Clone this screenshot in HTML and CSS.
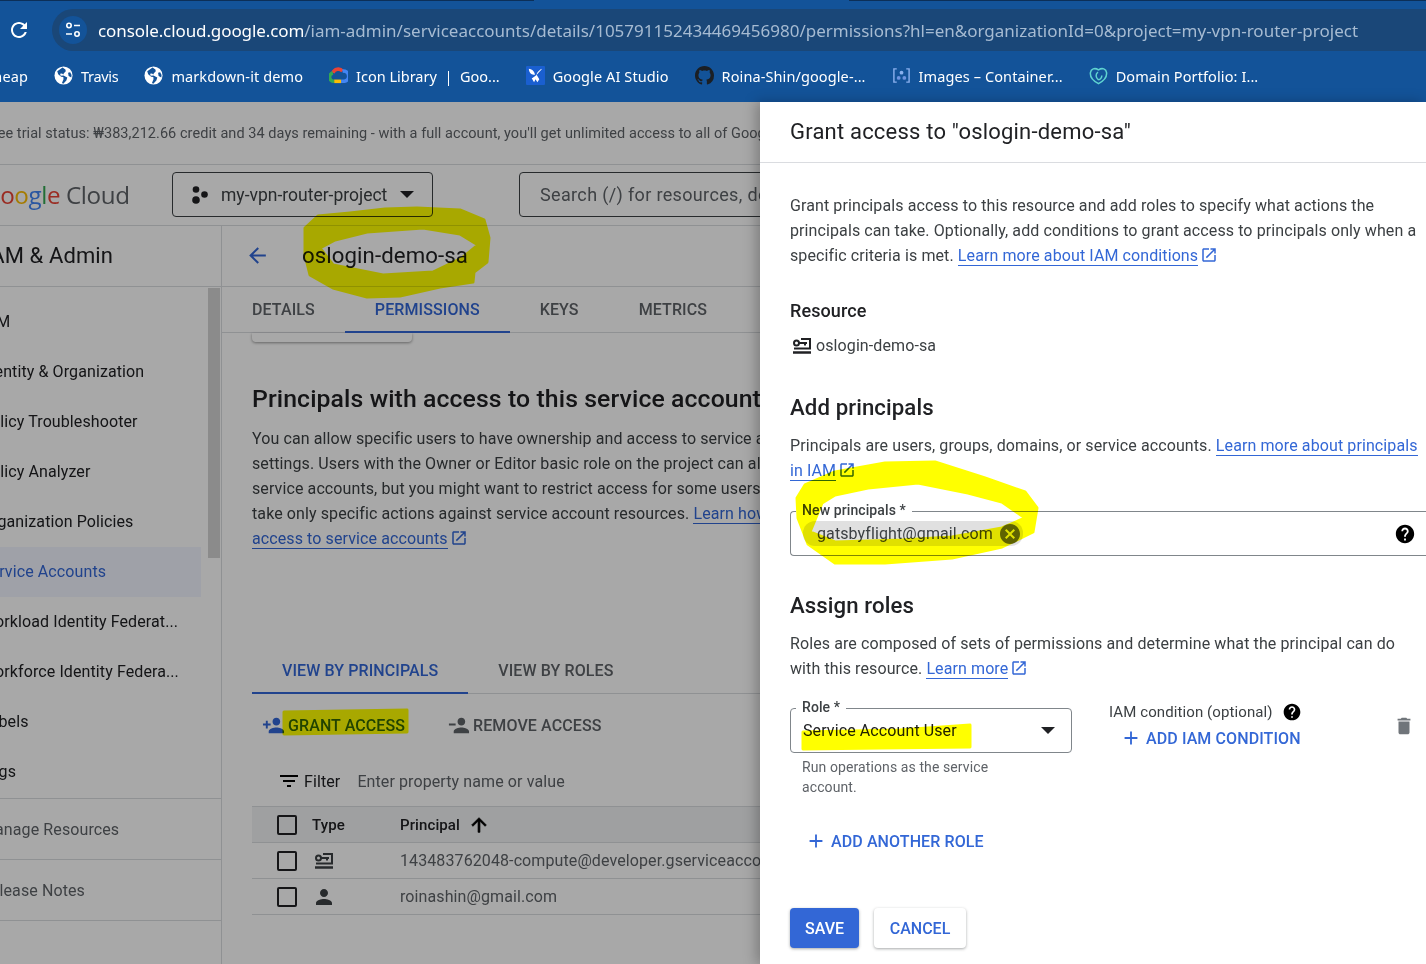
FILE: index.html
```html
<!DOCTYPE html>
<html lang="en">

<head>
    <meta charset="UTF-8">
    <meta name="viewport" content="width=device-width, initial-scale=1.0">
    <title>Grant access to oslogin-demo-sa</title>
    <link rel="stylesheet" href="styles.css">
</head>

<body>
    <svg class="defs" width="0" height="0">
        <symbol id="i-add" viewBox="0 0 24 24"><path d="M19 13h-6v6h-2v-6H5v-2h6V5h2v6h6v2z"/></symbol>
        <symbol id="i-help" viewBox="0 0 24 24"><path d="M12 2C6.48 2 2 6.48 2 12s4.48 10 10 10 10-4.48 10-10S17.52 2 12 2zm1 17h-2v-2h2v2zm2.07-7.75l-.9.92C13.45 12.9 13 13.5 13 15h-2v-.5c0-1.1.45-2.1 1.17-2.83l1.24-1.26c.37-.36.59-.86.59-1.41 0-1.1-.9-2-2-2s-2 .9-2 2H8c0-2.21 1.79-4 4-4s4 1.79 4 4c0 .88-.36 1.68-.93 2.25z"/></symbol>
        <symbol id="i-open" viewBox="0 0 24 24"><path d="M19 19H5V5h7V3H5c-1.11 0-2 .9-2 2v14c0 1.1.89 2 2 2h14c1.1 0 2-.9 2-2v-7h-2v7zM14 3v2h3.59l-9.83 9.83 1.41 1.41L19 6.41V10h2V3h-7z"/></symbol>
        <symbol id="i-person" viewBox="0 0 24 24"><path d="M12 12c2.21 0 4-1.79 4-4s-1.79-4-4-4-4 1.79-4 4 1.79 4 4 4zm0 2c-2.67 0-8 1.34-8 4v2h16v-2c0-2.66-5.33-4-8-4z"/></symbol>
        <symbol id="i-sa" viewBox="0 0 24 24"><g fill="none" stroke-width="2"><circle cx="6.500" cy="9" r="2.500"/><path d="M9 9h8M15 9v2.500M11 5h9v9.500H4"/><path d="M3 18.500h18" stroke-width="2.500"/></g></symbol>
        <symbol id="i-globe" viewBox="0 0 20 20"><circle cx="10" cy="10" r="9.500" fill="#fff"/><path fill="#135399" d="M9 1.600L6.800 3.200 3.400 5.400l1 3.400 3.200 2.600 2.200.2.2 2.400L8.400 18l1.400.6 3.200-3.400 1-3-4-2.200-3 .2-.6-2 2-.2 1.400 1 .6-1.400 2-2-.4-2zM17 6.600l-2.200.6.6 3.200 2.800 1.600.3-2.400z"/></symbol>
    </svg>

    <div class="chrome">
        <div class="strip"><span class="strip-a"></span><span class="strip-b"></span></div>
        <div class="toolbar">
            <svg class="reload" viewBox="0 0 24 24"><path d="M17.65 6.35C16.2 4.9 14.21 4 12 4c-4.42 0-7.99 3.58-7.99 8s3.57 8 7.99 8c3.73 0 6.84-2.55 7.73-6h-2.08c-.82 2.33-3.04 4-5.65 4-3.31 0-6-2.69-6-6s2.69-6 6-6c1.66 0 3.14.69 4.22 1.78L13 11h7V4l-2.35 2.35z"/></svg>
            <div class="omnibox">
                <span class="site-info">
                    <svg viewBox="0 0 20 20"><circle cx="6" cy="5.500" r="2.200"/><path d="M11 5.500h6"/><circle cx="14" cy="14" r="2.200"/><path d="M3 14h6"/></svg>
                </span>
                <span class="url"><b>console.cloud.google.com</b>/iam-admin/serviceaccounts/details/105791152434469456980/permissions?hl=en&amp;organizationId=0&amp;project=my-vpn-router-project</span>
            </div>
        </div>
        <div class="bookmarks">
            <a class="bm bm-first">Namecheap</a>
            <a class="bm bm-tight"><svg><use href="#i-globe"/></svg>Travis</a>
            <a class="bm"><svg><use href="#i-globe"/></svg>markdown-it demo</a>
            <a class="bm bm-plain">
                <svg viewBox="2 3 17 15" fill="none" stroke-width="3.200">
                    <path d="M5.500 8.200a5 5 0 0 1 8.600-1.600" stroke="#ea4335"/>
                    <path d="M14.100 6.600a4.600 4.600 0 0 1 1.700 9.100h-3" stroke="#4285f4"/>
                    <path d="M12.800 15.700H6.600" stroke="#fbbc04"/>
                    <path d="M6.600 15.700a3.800 3.800 0 0 1-1.100-7.500" stroke="#34a853"/>
                </svg>Icon Library &nbsp;|&nbsp; Goo...</a>
            <a class="bm">
                <svg viewBox="0 0 20 20"><rect width="20" height="20" rx="1" fill="#1a5fd0"/><path fill="#fff" d="M3 3c3 0 5.500 2.200 6.500 6-3.500 1-6.500-2-6.500-6zM17 3c-2.500.5-5 3.500-6 6l3 5-2 3-2-3-1.500 3L6 13c2-.5 6-4 11-10z"/></svg>Google AI Studio</a>
            <a class="bm">
                <svg viewBox="0 0 16 16"><path fill="#1b1f24" d="M8 0C3.58 0 0 3.58 0 8c0 3.54 2.29 6.53 5.47 7.59.4.07.55-.17.55-.38 0-.19-.01-.82-.01-1.49-2.01.37-2.53-.49-2.69-.94-.09-.23-.48-.94-.82-1.13-.28-.15-.68-.52-.01-.53.63-.01 1.08.58 1.23.82.72 1.21 1.87.87 2.33.66.07-.52.28-.87.51-1.07-1.78-.2-3.64-.89-3.64-3.95 0-.87.31-1.59.82-2.15-.08-.2-.36-1.02.08-2.12 0 0 .67-.21 2.2.82.64-.18 1.32-.27 2-.27.68 0 1.36.09 2 .27 1.53-1.04 2.2-.82 2.2-.82.44 1.1.16 1.92.08 2.12.51.56.82 1.27.82 2.15 0 3.07-1.87 3.75-3.65 3.95.29.25.54.73.54 1.48 0 1.07-.01 1.93-.01 2.2 0 .21.15.46.55.38A8.013 8.013 0 0016 8c0-4.42-3.58-8-8-8z"/></svg>Roina-Shin/google-...</a>
            <a class="bm">
                <svg viewBox="0 0 20 20" fill="none" stroke="#8ab0ee" stroke-width="1.500"><path d="M5 3H2v14h3M15 3h3v14h-3"/><circle cx="10" cy="7" r="2" fill="#8ab0ee" stroke="none"/><circle cx="7" cy="12.500" r="2" fill="#6d94e0" stroke="none"/><circle cx="13" cy="12.500" r="2" fill="#6d94e0" stroke="none"/></svg>Images – Container...</a>
            <a class="bm">
                <svg viewBox="0 0 20 20" fill="none" stroke="#5fd3d0" stroke-width="1.600"><path d="M10 18.500C4 15.500 1 11 1.500 7 2 3 6 1.500 10 4c4-2.500 8-1 8.500 3C19 12 15 16 10 18.500z"/><path d="M10 14.500c-3-2-3.500-6-.5-8M13.500 10c0 2-1.500 4.500-3.500 4.500"/></svg>Domain Portfolio: I...</a>
        </div>
    </div>

    <div class="stage">
        <div class="console">
            <div class="notice"><span>Free trial status: ₩383,212.66 credit and 34 days remaining - with a full account, you'll get unlimited access to all of Google Cloud</span></div>

            <header class="topbar">
                <div class="logo"><span class="g1">G</span><span class="g2">o</span><span class="g3">o</span><span class="g1">g</span><span class="g4">l</span><span class="g2">e</span> <span class="cloud">Cloud</span></div>
                <div class="project">
                    <svg viewBox="0 0 20 20"><circle cx="6" cy="4.500" r="3.300"/><circle cx="14.500" cy="9.500" r="3.300"/><circle cx="6" cy="15" r="3.800"/></svg>
                    <span>my-vpn-router-project</span>
                    <i class="caret"></i>
                </div>
                <div class="search">Search (/) for resources, docs, products and more</div>
            </header>

            <div class="columns">
                <aside class="sidebar">
                    <div class="side-title"><span>IAM &amp; Admin</span></div>
                    <nav class="side-nav">
                        <div class="group">
                            <a>IAM</a>
                            <a>Identity &amp; Organization</a>
                            <a>Policy Troubleshooter</a>
                            <a>Policy Analyzer</a>
                            <a>Organization Policies</a>
                            <a class="active">Service Accounts</a>
                            <a>Workload Identity Federat...</a>
                            <a>Workforce Identity Federa...</a>
                            <a>Labels</a>
                            <a>Tags</a>
                        </div>
                        <div class="group grey"><a>Manage Resources</a></div>
                        <div class="group grey"><a>Release Notes</a></div>
                    </nav>
                    <span class="scroll-thumb"></span>
                </aside>

                <main class="content">
                    <div class="page-head">
                        <svg class="back" viewBox="0 0 24 24"><path d="M20 11H7.830l5.590-5.590L12 4l-8 8 8 8 1.410-1.410L7.830 13H20v-2z"/></svg>
                        <h1>oslogin-demo-sa</h1>
                    </div>
                    <div class="tabs page-tabs">
                        <a>DETAILS</a>
                        <a class="on">PERMISSIONS</a>
                        <a>KEYS</a>
                        <a>METRICS</a>
                    </div>
                    <div class="card-stub"></div>

                    <h2>Principals with access to this service account</h2>
                    <p class="intro">You can allow specific users to have ownership and access to service account<br>settings. Users with the Owner or Editor basic role on the project can already modify<br>service accounts, but you might want to restrict access for some users so that they<br>take only specific actions against service account resources. <a class="lnk">Learn how to manage</a><br><a class="lnk">access to service accounts</a> <svg class="ext"><use href="#i-open"/></svg></p>

                    <div class="tabs view-tabs">
                        <a class="on">VIEW BY PRINCIPALS</a>
                        <a>VIEW BY ROLES</a>
                    </div>

                    <div class="actions">
                        <a class="act blue"><svg viewBox="0 0 24 24"><path d="M15 12c2.210 0 4-1.790 4-4s-1.790-4-4-4-4 1.790-4 4 1.790 4 4 4zm-9-2V7H4v3H1v2h3v3h2v-3h3v-2H6zm9 4c-2.670 0-8 1.340-8 4v2h16v-2c0-2.660-5.330-4-8-4z"/></svg>GRANT ACCESS</a>
                        <a class="act"><svg viewBox="0 0 24 24"><path d="M15 12c2.210 0 4-1.790 4-4s-1.790-4-4-4-4 1.790-4 4 1.790 4 4 4zM2 10v2h7v-2H2zm13 4c-2.670 0-8 1.340-8 4v2h16v-2c0-2.660-5.330-4-8-4z"/></svg>REMOVE ACCESS</a>
                    </div>

                    <div class="filter">
                        <svg viewBox="0 0 24 24"><path d="M10 18h4v-2h-4v2zM3 6v2h18V6H3zm3 7h12v-2H6v2z"/></svg>
                        <span class="f-label">Filter</span>
                        <span class="f-hint">Enter property name or value</span>
                    </div>

                    <div class="table">
                        <div class="tr th">
                            <i class="check"></i>
                            <span class="c-type">Type</span>
                            <span class="c-name">Principal <svg viewBox="0 0 24 24"><path d="M4 12l1.410 1.410L11 7.830V20h2V7.830l5.580 5.590L20 12l-8-8-8 8z"/></svg></span>
                        </div>
                        <div class="tr">
                            <i class="check"></i>
                            <span class="c-type"><svg class="sa"><use href="#i-sa"/></svg></span>
                            <span class="c-name">143483762048-compute@developer.gserviceaccount.com</span>
                        </div>
                        <div class="tr">
                            <i class="check"></i>
                            <span class="c-type"><svg><use href="#i-person"/></svg></span>
                            <span class="c-name">roinashin@gmail.com</span>
                        </div>
                    </div>
                </main>
            </div>
            <div class="scrim"></div>
        </div>

        <section class="panel">
            <div class="panel-head">Grant access to "oslogin-demo-sa"</div>
            <div class="panel-body">
                <p class="lead">Grant principals access to this resource and add roles to specify what actions the principals can take. Optionally, add conditions to grant access to principals only when a specific criteria is met. <a class="lnk">Learn more about IAM conditions</a> <svg class="ext"><use href="#i-open"/></svg></p>

                <h3 class="res-title">Resource</h3>
                <div class="res-row"><svg class="sa"><use href="#i-sa"/></svg>oslogin-demo-sa</div>

                <h2 class="sec sec-add">Add principals</h2>
                <p class="lead">Principals are users, groups, domains, or service accounts. <a class="lnk">Learn more about principals in IAM</a> <svg class="ext"><use href="#i-open"/></svg></p>

                <div class="field field-principals">
                    <label>New principals *</label>
                    <span class="chip">gatsbyflight@gmail.com
                        <svg viewBox="0 0 24 24"><path d="M12 2C6.470 2 2 6.470 2 12s4.470 10 10 10 10-4.470 10-10S17.530 2 12 2zm5 13.590L15.590 17 12 13.410 8.410 17 7 15.590 10.590 12 7 8.410 8.410 7 12 10.590 15.590 7 17 8.410 13.410 12 17 15.590z"/></svg>
                    </span>
                    <svg class="help"><use href="#i-help"/></svg>
                </div>

                <h2 class="sec sec-roles">Assign roles</h2>
                <p class="lead">Roles are composed of sets of permissions and determine what the principal can do with this resource. <a class="lnk">Learn more</a> <svg class="ext"><use href="#i-open"/></svg></p>

                <div class="role-row">
                    <div class="role-col">
                        <div class="field field-role">
                            <label>Role *</label>
                            <span>Service Account User</span>
                            <i class="caret"></i>
                        </div>
                        <p class="hint">Run operations as the service account.</p>
                    </div>
                    <div class="cond-col">
                        <div class="cond-label">IAM condition (optional) <svg class="help"><use href="#i-help"/></svg></div>
                        <a class="add-btn add-cond"><svg><use href="#i-add"/></svg>ADD IAM CONDITION</a>
                    </div>
                    <svg class="trash" viewBox="0 0 24 24"><path d="M6 19c0 1.100.9 2 2 2h8c1.100 0 2-.9 2-2V7H6v12zM19 4h-3.500l-1-1h-5l-1 1H5v2h14V4z"/></svg>
                </div>

                <a class="add-btn add-role"><svg><use href="#i-add"/></svg>ADD ANOTHER ROLE</a>

                <div class="buttons">
                    <button class="save">SAVE</button>
                    <button class="cancel">CANCEL</button>
                </div>
            </div>
        </section>
    </div>

    <!-- marker scribbles drawn over the screenshot -->
    <svg class="marker" viewBox="0 0 1426 964">
        <path fill-rule="evenodd" d="M305 228L318 216 350 213 385 209 417 208 460 210 484 220 489 238 487 262 474 272 473 282 440 287 400 296 367 297 333 288 310 275 305 255ZM320 248L333 265 383 275 433 272 462 258 478 245 460 234 423 228 367 232 335 240Z"/>
        <path fill-rule="evenodd" d="M797 498L805 485 835 472 885 463 935 462 985 478 1025 492 1037 508 1033 532 1002 547 952 558 885 563 835 563 808 544 798 518ZM835 495L822 503 810 532 835 542 902 540 952 537 1002 528 1025 518 1002 502 968 493 918 483 868 488Z"/>
        <path d="M284 712L345 711 407 710 407 732 345 733 284 734Z"/>
        <path d="M803 732L900 730 970 725 970 747 880 748 803 749Z"/>
    </svg>
</body>

</html>
```

FILE: styles.css
```css
html, body {
    margin: 0;
    height: 100%;
}

body {
    width: 1426px;
    height: 964px;
    position: relative;
    overflow: hidden;
    font-family: Roboto, "Liberation Sans", sans-serif;
    font-size: 16px;
    letter-spacing: .1px;
    color: #202124;
    background-color: #fff;
}

p, h1, h2, h3 {
    margin: 0;
}

.defs {
    position: absolute;
}

/* browser chrome */
.chrome {
    height: 102px;
    background-color: #135399;
    font-family: "Noto Sans", "Open Sans", sans-serif;
    color: #fff;
}

.strip {
    height: 9px;
    display: flex;
    justify-content: space-between;
}

.strip span {
    height: 1px;
    background-color: #0c2f58;
}

.strip-a {
    width: 534px;
}

.strip-b {
    width: 577px;
}

.toolbar {
    height: 42px;
    display: flex;
    align-items: center;
}

.reload {
    width: 24px;
    height: 24px;
    margin: 0 21px 0 7px;
    fill: #fff;
}

.omnibox {
    flex: 1;
    height: 42px;
    display: flex;
    align-items: center;
    border-radius: 21px 0 0 21px;
    background-color: #1a4778;
    white-space: nowrap;
    overflow: hidden;
}

.site-info {
    width: 28px;
    height: 28px;
    margin: 0 11px 0 7px;
    border-radius: 50%;
    background-color: #135399;
    display: flex;
    align-items: center;
    justify-content: center;
}

.site-info svg {
    width: 20px;
    height: 20px;
    fill: none;
    stroke: #fff;
    stroke-width: 1.6;
}

.url {
    font-size: 17px;
    color: #a6bbd2;
    letter-spacing: 0;
}

.url b {
    font-weight: 400;
    color: #fff;
    letter-spacing: -.1px;
}

.bookmarks {
    height: 51px;
    box-sizing: border-box;
    padding-bottom: 2px;
    display: flex;
    align-items: center;
    gap: 26px;
    font-size: 14.5px;
    white-space: nowrap;
}

.bm {
    display: flex;
    align-items: center;
    gap: 8px;
}

.bm svg {
    width: 19px;
    height: 19px;
    flex: none;
}

.bm-first {
    margin-left: -55px;
}

.bm-tight {
    letter-spacing: -.3px;
}

.bm-plain {
    letter-spacing: 0;
}

/* dimmed console */
.stage {
    height: 862px;
    display: flex;
}

.console {
    width: 760px;
    flex: none;
    position: relative;
    overflow: hidden;
    background-color: #fff;
}

.scrim {
    position: absolute;
    top: 0;
    left: 0;
    right: 0;
    bottom: 0;
    background-color: rgba(0, 0, 0, .34);
}

.notice {
    height: 63px;
    box-sizing: border-box;
    border-bottom: 1px solid #dadce0;
    display: flex;
    align-items: center;
    font-size: 14.5px;
    letter-spacing: .05px;
    color: #5f6368;
    white-space: nowrap;
}

.notice span {
    margin-left: -15px;
}

.topbar {
    height: 61px;
    box-sizing: border-box;
    border-bottom: 1px solid #dadce0;
    display: flex;
    align-items: center;
    padding-bottom: 1px;
    white-space: nowrap;
}

.logo {
    width: 172px;
    flex: none;
    margin-left: -17px;
    padding-right: 17px;
    font-family: "Open Sans", Roboto, sans-serif;
    font-size: 24.2px;
    letter-spacing: -.4px;
}

.g1 { color: #4285f4; }
.g2 { color: #ea4335; }
.g3 { color: #fbbc04; }
.g4 { color: #34a853; }
.cloud { color: #5f6368; }

.project {
    width: 261px;
    height: 45px;
    flex: none;
    box-sizing: border-box;
    border: 1px solid #3c4043;
    border-radius: 4px;
    display: flex;
    align-items: center;
    padding-left: 17px;
    font-size: 17.5px;
    letter-spacing: 0;
    color: #3c4043;
}

.project svg {
    width: 20px;
    height: 20px;
    margin-right: 11px;
    fill: #202124;
}

.project .caret {
    margin-left: 13px;
}

.caret {
    width: 0;
    height: 0;
    border-left: 7px solid transparent;
    border-right: 7px solid transparent;
    border-top: 7px solid #202124;
}

.search {
    margin-left: 86px;
    width: 400px;
    flex: none;
    height: 45px;
    box-sizing: border-box;
    border: 1px solid #3c4043;
    border-radius: 4px;
    padding-left: 20px;
    line-height: 43px;
    font-size: 18px;
    letter-spacing: .35px;
    color: #5f6368;
    overflow: hidden;
}

.columns {
    display: flex;
    height: 738px;
}

.sidebar {
    width: 222px;
    flex: none;
    box-sizing: border-box;
    border-right: 1px solid #dadce0;
    position: relative;
    overflow: hidden;
    white-space: nowrap;
}

.side-title {
    height: 61px;
    box-sizing: border-box;
    border-bottom: 1px solid #dadce0;
    line-height: 60px;
    font-size: 22px;
}

.side-title span {
    margin-left: -16px;
}

.side-nav {
    padding-top: 10px;
}

.group {
    border-bottom: 1px solid #dadce0;
}

.group:first-child {
    padding-bottom: 1px;
}

.group a {
    display: block;
    width: 201px;
    height: 50px;
    line-height: 50px;
    text-indent: -19px;
    overflow: hidden;
}

.group.grey a {
    height: 60px;
    line-height: 62px;
    color: #5f6368;
}

.group a.active {
    color: #3367d6;
    background-color: #f1f4ff;
}

.scroll-thumb {
    position: absolute;
    top: 62px;
    left: 208px;
    width: 12px;
    height: 270px;
    background-color: #d4d4d4;
}

.content {
    flex: 1;
    min-width: 0;
    padding-left: 30px;
    white-space: nowrap;
    overflow: hidden;
}

.page-head {
    height: 61px;
    margin-left: -30px;
    box-sizing: border-box;
    border-bottom: 1px solid #dadce0;
    display: flex;
    align-items: center;
    padding: 0 0 2px 23px;
}

.back {
    width: 25px;
    height: 25px;
    fill: #3367d6;
    margin-right: 32px;
}

.page-head h1 {
    font-size: 22.2px;
    font-weight: 400;
}

.tabs {
    display: flex;
    font-weight: 500;
    color: #5f6368;
    box-sizing: border-box;
    border-bottom: 1px solid #dadce0;
}

.tabs a {
    display: block;
    box-sizing: border-box;
    padding: 0 30px;
}

.tabs a.on {
    color: #3367d6;
    border-bottom: 2px solid #3367d6;
    margin-bottom: -1px;
}

.page-tabs {
    height: 46px;
    line-height: 46px;
    margin-left: -30px;
}

.view-tabs {
    height: 46px;
    line-height: 46px;
    margin-top: 97px;
}

.card-stub {
    width: 160px;
    height: 9px;
    box-sizing: border-box;
    border-radius: 0 0 4px 4px;
    background-color: #fff;
    box-shadow: 0 1px 3px rgba(0, 0, 0, .4);
}

.content h2 {
    margin-top: 42px;
    font-size: 24.8px;
    line-height: 30px;
    font-weight: 500;
}

.intro {
    margin-top: 12px;
    line-height: 25px;
    color: #3c4043;
}

.lnk {
    color: #3367d6;
    border-bottom: 1px solid #3367d6;
}

.ext {
    width: 18px;
    height: 18px;
    margin-left: -2px;
    fill: #3367d6;
    vertical-align: -3px;
}

.actions {
    height: 62px;
    display: flex;
    align-items: center;
    gap: 42px;
    padding-left: 10px;
    font-weight: 500;
    color: #5f6368;
}

.act {
    display: flex;
    align-items: center;
    gap: 3px;
}

.act svg {
    width: 23px;
    height: 23px;
    fill: currentColor;
}

.act.blue {
    color: #3367d6;
}

.filter {
    height: 50px;
    display: flex;
    align-items: center;
    padding-left: 25px;
}

.filter svg {
    width: 24px;
    height: 24px;
    margin-right: 3px;
}

.f-label {
    margin-right: 17px;
}

.f-hint {
    color: #5f6368;
}

.table {
    border-top: 1px solid #dadce0;
    color: #5f6368;
}

.tr {
    height: 36px;
    box-sizing: border-box;
    border-bottom: 1px solid #dadce0;
    display: flex;
    align-items: center;
    padding-left: 25px;
}

.tr.th {
    font-size: 15px;
    font-weight: 500;
    color: #202124;
    background-color: #f1f3f4;
}

.check {
    width: 20px;
    height: 20px;
    box-sizing: border-box;
    border: 2px solid #202124;
    border-radius: 2px;
    flex: none;
}

.c-type {
    width: 88px;
    flex: none;
    margin-left: 15px;
    display: flex;
    align-items: center;
}

.c-type svg {
    width: 24px;
    height: 24px;
    fill: #3c4043;
}

.c-type .sa {
    fill: none;
    stroke: #3c4043;
}

.c-name {
    display: flex;
    align-items: center;
    gap: 8px;
}

.c-name svg {
    width: 22px;
    height: 22px;
    fill: #000;
    stroke: #000;
    stroke-width: .8;
}

/* right panel */
.panel {
    flex: 1;
    position: relative;
    background-color: #fff;
    box-shadow: -4px 0 12px rgba(0, 0, 0, .25);
}

.panel-head {
    height: 61px;
    box-sizing: border-box;
    border-bottom: 1px solid #dadce0;
    padding: 0 0 2px 30px;
    display: flex;
    align-items: center;
    font-size: 22px;
    letter-spacing: .2px;
}

.panel-body {
    padding: 30px 8px 0 30px;
}

.lead {
    line-height: 25px;
    color: #3c4043;
}

.res-title {
    margin-top: 30px;
    font-size: 18px;
    line-height: 25px;
    font-weight: 500;
}

.res-row {
    margin-top: 10px;
    line-height: 25px;
    display: flex;
    align-items: center;
    gap: 2px;
    color: #3c4043;
}

.res-row svg {
    width: 24px;
    height: 24px;
    fill: none;
    stroke: #202124;
}

.sec {
    font-size: 22.2px;
    line-height: 30px;
    font-weight: 500;
}

.sec-add {
    margin-top: 34px;
}

.sec-add + .lead {
    margin-top: 11px;
}

.sec-roles {
    margin-top: 34px;
}

.sec-roles + .lead {
    margin-top: 11px;
}

.field {
    position: relative;
    box-sizing: border-box;
    border: 1px solid #80868b;
    border-radius: 4px;
    display: flex;
    align-items: center;
}

.field label {
    position: absolute;
    top: -11px;
    left: 5px;
    padding: 0 6px;
    font-size: 14px;
    line-height: 18px;
    font-weight: 500;
    color: #3c4043;
    background-color: #fff;
}

.field-principals {
    height: 45px;
    margin-top: 28px;
    margin-right: -8px;
    border-right: 0;
    border-radius: 4px 0 0 4px;
    padding: 0 10px 0 12px;
    justify-content: space-between;
}

.chip {
    height: 25px;
    display: flex;
    align-items: center;
    gap: 5px;
    border-radius: 12px;
    background-color: #e0e0e0;
    padding: 0 1px 0 14px;
    color: #3c4043;
}

.chip svg {
    width: 24px;
    height: 24px;
    fill: #5f6368;
}

.help {
    width: 22px;
    height: 22px;
    fill: #000;
}

.role-row {
    margin-top: 27px;
    display: flex;
    align-items: flex-start;
}

.role-col {
    width: 282px;
    flex: none;
}

.field-role {
    height: 45px;
    padding: 0 16px 0 12px;
    justify-content: space-between;
}

.hint {
    margin: 4px 70px 0 12px;
    font-size: 14px;
    line-height: 20px;
    color: #5f6368;
}

.cond-col {
    margin-left: 37px;
    width: 260px;
    flex: none;
}

.cond-label {
    display: flex;
    align-items: center;
    gap: 9px;
    height: 22px;
    margin-top: -8px;
    padding-top: 1px;
    font-size: 15px;
    color: #3c4043;
}

.cond-label .help {
    width: 20px;
    height: 20px;
}

.add-btn {
    display: flex;
    align-items: center;
    gap: 4px;
    font-weight: 500;
    color: #3367d6;
}

.add-btn svg {
    width: 22px;
    height: 22px;
    fill: #3367d6;
}

.add-cond {
    margin: 4px 0 0 11px;
}

.trash {
    width: 22px;
    height: 22px;
    margin: 7px 0 0 24px;
    fill: #70757a;
}

.add-role {
    margin: 33px 0 0 15px;
}

.buttons {
    margin-top: 56px;
    display: flex;
    gap: 15px;
}

.buttons button {
    height: 40px;
    border: 0;
    border-radius: 4px;
    font-family: inherit;
    font-size: 16px;
    font-weight: 500;
    box-shadow: 0 1px 3px rgba(60, 64, 67, .45);
}

.save {
    width: 69px;
    color: #fff;
    background-color: #3367d6;
}

.cancel {
    width: 92px;
    color: #3367d6;
    background-color: #fff;
}

/* scribbles, multiply so the text underneath shows through */
.marker {
    position: absolute;
    top: 0;
    left: 0;
    width: 1426px;
    height: 964px;
    fill: #ff0;
    stroke: #ff0;
    stroke-width: 3;
    stroke-linejoin: round;
    mix-blend-mode: multiply;
    pointer-events: none;
}
```
